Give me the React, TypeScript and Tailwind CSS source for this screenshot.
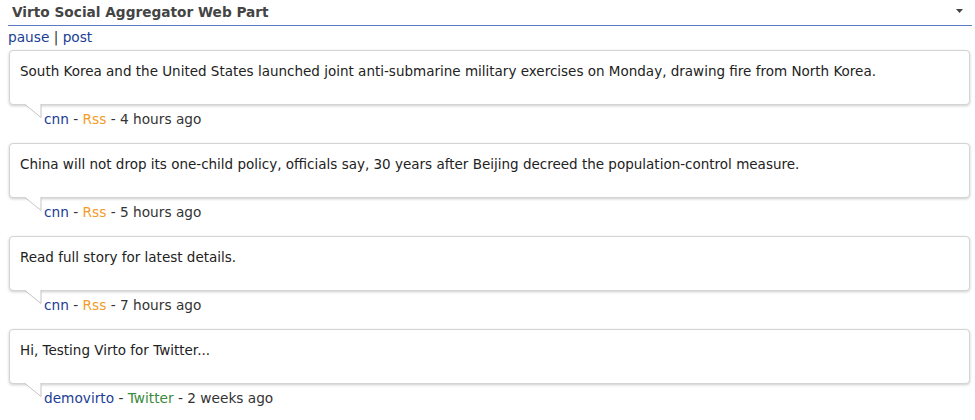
const items = [
  {
    text: "South Korea and the United States launched joint anti-submarine military exercises on Monday, drawing fire from North Korea.",
    author: "cnn",
    source: "Rss",
    when: "4 hours ago",
  },
  {
    text: "China will not drop its one-child policy, officials say, 30 years after Beijing decreed the population-control measure.",
    author: "cnn",
    source: "Rss",
    when: "5 hours ago",
  },
  {
    text: "Read full story for latest details.",
    author: "cnn",
    source: "Rss",
    when: "7 hours ago",
  },
  {
    text: "Hi, Testing Virto for Twitter...",
    author: "demovirto",
    source: "Twitter",
    when: "2 weeks ago",
  },
];

function Tail() {
  return (
    <svg
      className="absolute left-[7px] top-[54px]"
      width="28"
      height="16"
      viewBox="0 0 28 16"
    >
      <polygon points="9,0 25,0 25,14" fill="#ffffff" />
      <polyline points="9,0.5 25,13.5 25,0" fill="none" stroke="#c4c4c4" strokeWidth="1" />
    </svg>
  );
}

export default function App() {
  return (
    <div className="w-[975px] h-[420px] overflow-hidden bg-white text-[#333] font-['DejaVu_Sans',Verdana,sans-serif]">
      <div className="mx-[8px] mr-[3px] h-[26px] flex items-center justify-between border-b border-[#5a7bbf] pl-[4px]">
        <span className="text-[13.7px] font-bold text-[#444] leading-none">
          Virto Social Aggregator Web Part
        </span>
        <svg width="8" height="5" viewBox="0 0 8 5" className="mr-[8px] mt-[-2px]">
          <polygon points="0,0 7,0 3.5,4" fill="#444" />
        </svg>
      </div>

      <div className="ml-[8px] mt-[3px] text-[13.7px] leading-[16px] text-[#1c3e94]">
        <span>pause</span>
        <span className="text-[#333]"> | </span>
        <span>post</span>
      </div>

      <div className="mt-[5px] ml-[9px] w-[961px] flex flex-col">
        {items.map((it, i) => (
          <div key={i} className="relative">
            <div className="h-[55px] rounded-[4px] border border-[#d4d4d4] bg-white px-[10px] pt-[12px] text-[13.5px] leading-[16px] text-[#222] shadow-[0_1px_3px_rgba(0,0,0,0.2)]">
              {it.text}
            </div>
            <Tail />
            <div className="h-[38px] pl-[35px] pt-[6px] text-[13.7px] leading-[16px] text-[#333]">
              <span className="text-[#1c3e94]">{it.author}</span>
              {" - "}
              <span
                className={
                  it.source === "Twitter" ? "text-[#3b8a3b]" : "text-[#f39c2b]"
                }
              >
                {it.source}
              </span>
              {" - "}
              {it.when}
            </div>
          </div>
        ))}
      </div>
    </div>
  );
}
